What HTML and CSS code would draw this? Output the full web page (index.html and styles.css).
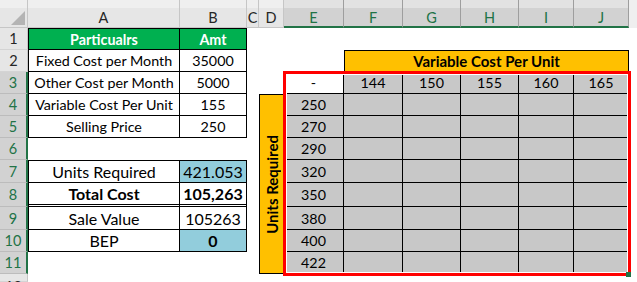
FILE: index.html
```html
<!DOCTYPE html>
<html>
<head>
<meta charset="utf-8">
<link rel="stylesheet" href="styles.css">
</head>
<body>
<div class="sheet">
  <div class="corner"><svg width="14" height="14" viewBox="0 0 14 14"><polygon points="14,0 14,14 0,14" fill="#b4b4b4"/></svg></div>
  <div class="colh ca">A</div>
  <div class="colh cb">B</div>
  <div class="colh cc">C</div>
  <div class="colh cd">D</div>
  <div class="colh ce sel">E</div>
  <div class="colh cf sel">F</div>
  <div class="colh cg sel">G</div>
  <div class="colh chh sel">H</div>
  <div class="colh ci sel">I</div>
  <div class="colh cj sel">J</div>
  <div class="colh cend blank"></div>

  <div class="rowh r1">1</div>
  <div class="rowh r2">2</div>
  <div class="rowh r3 sel">3</div>
  <div class="rowh r4 sel">4</div>
  <div class="rowh r5 sel">5</div>
  <div class="rowh r6 sel">6</div>
  <div class="rowh r7 sel">7</div>
  <div class="rowh r8 sel">8</div>
  <div class="rowh r9 sel">9</div>
  <div class="rowh r10 sel">10</div>
  <div class="rowh r11 sel">11</div>
  <div class="rowh r12">12</div>

  <div class="cell ca r1 bx bt bl green">Particualrs</div>
  <div class="cell cb r1 bx bt green">Amt</div>
  <div class="cell ca r2 bx bl">Fixed Cost per Month</div>
  <div class="cell cb r2 bx">35000</div>
  <div class="cell ca r3 bx bl">Other Cost per Month</div>
  <div class="cell cb r3 bx">5000</div>
  <div class="cell ca r4 bx bl">Variable Cost Per Unit</div>
  <div class="cell cb r4 bx">155</div>
  <div class="cell ca r5 bx bl">Selling Price</div>
  <div class="cell cb r5 bx">250</div>

  <div class="cell ca r7 bx bt bl big">Units Required</div>
  <div class="cell cb r7 bx bt big blue">421.053</div>
  <div class="cell ca r8 bx bl big bold dbl">Total Cost</div>
  <div class="cell cb r8 bx big bold dbl">105,263</div>
  <div class="cell ca r9 bx bl big">Sale Value</div>
  <div class="cell cb r9 bx big">105263</div>
  <div class="cell ca r10 bx bl big">BEP</div>
  <div class="cell cb r10 bx big bold blue">0</div>

  <div class="cell vhead">Variable Cost Per Unit</div>
  <div class="cell dhead"><span class="vtext">Units Required</span></div>

  <div class="data">
    <div class="d w">-</div><div class="d">144</div><div class="d">150</div><div class="d">155</div><div class="d">160</div><div class="d">165</div>
    <div class="d">250</div><div class="d"></div><div class="d"></div><div class="d"></div><div class="d"></div><div class="d"></div>
    <div class="d">270</div><div class="d"></div><div class="d"></div><div class="d"></div><div class="d"></div><div class="d"></div>
    <div class="d">290</div><div class="d"></div><div class="d"></div><div class="d"></div><div class="d"></div><div class="d"></div>
    <div class="d">320</div><div class="d"></div><div class="d"></div><div class="d"></div><div class="d"></div><div class="d"></div>
    <div class="d">350</div><div class="d"></div><div class="d"></div><div class="d"></div><div class="d"></div><div class="d"></div>
    <div class="d">380</div><div class="d"></div><div class="d"></div><div class="d"></div><div class="d"></div><div class="d"></div>
    <div class="d">400</div><div class="d"></div><div class="d"></div><div class="d"></div><div class="d"></div><div class="d"></div>
    <div class="d">422</div><div class="d"></div><div class="d"></div><div class="d"></div><div class="d"></div><div class="d"></div>
  </div>

  <div class="selbox"><span class="handle"></span></div>
</div>
</body>
</html>
```

FILE: styles.css
```css
html, body {
  margin: 0;
  padding: 0;
  background: #fff;
}

.sheet {
  display: grid;
  width: 637px;
  height: 282px;
  overflow: hidden;
  grid-template-columns: [hdr] 28px [a] 152px [b] 67px [c] 12px [d] 25px [e] 60px [f] 59px [g] 58px [h] 58px [i] 55px [j] 55px [jend] 8px [end];
  grid-template-rows: [top] 8px [colhdr] 20px [r1] 22px [r2] 22px [r3] 22px [r4] 22px [r5] 22px [r6] 22px [r7] 23px [r8] 24px [r9] 23px [r10] 22px [r11] 22px [r12] 8px [end];
  font-family: Lato, "Liberation Sans", sans-serif;
  font-size: 14.3px;
  color: #000;
}

.ca { grid-column: a; }
.cb { grid-column: b; }
.cc { grid-column: c; }
.cd { grid-column: d; }
.ce { grid-column: e; }
.cf { grid-column: f; }
.cg { grid-column: g; }
.chh { grid-column: h; }
.ci { grid-column: i; }
.cj { grid-column: j; }
.cend { grid-column: jend / end; }

.r1 { grid-row: r1; }
.r2 { grid-row: r2; }
.r3 { grid-row: r3; }
.r4 { grid-row: r4; }
.r5 { grid-row: r5; }
.r6 { grid-row: r6; }
.r7 { grid-row: r7; }
.r8 { grid-row: r8; }
.r9 { grid-row: r9; }
.r10 { grid-row: r10; }
.r11 { grid-row: r11; }
.r12 { grid-row: r12 / end; }

/* headers */
.corner {
  grid-column: hdr;
  grid-row: top / r1;
  background: linear-gradient(#efefef 0 8px, #e6e6e6 8px);
  border-right: 1px solid #c6c6c6;
  border-bottom: 1px solid #c6c6c6;
  box-sizing: border-box;
  display: flex;
  align-items: flex-end;
  justify-content: flex-end;
  padding: 0 2px 2px 0;
}

.colh {
  grid-row: top / r1;
  box-sizing: border-box;
  padding-top: 8px;
  display: flex;
  align-items: center;
  justify-content: center;
  background: linear-gradient(#efefef 0 8px, #e6e6e6 8px);
  border-right: 1px solid #c6c6c6;
  border-bottom: 1px solid #c6c6c6;
  color: #262626;
  font-size: 14.5px;
}
.colh.sel {
  background: linear-gradient(#e2e2e2 0 8px, #d2d2d2 8px);
  border-right-color: #9e9e9e;
  border-bottom: 2px solid #217346;
  color: #217346;
}
.colh.blank {
  background: #efefef;
  border-right: none;
  border-bottom: none;
}

.rowh {
  grid-column: hdr;
  box-sizing: border-box;
  display: flex;
  align-items: center;
  justify-content: center;
  background: #e6e6e6;
  border-right: 1px solid #c6c6c6;
  border-bottom: 1px solid #d4d4d4;
  color: #262626;
  font-size: 14.5px;
}
.rowh.sel {
  background: #d2d2d2;
  border-right: 2px solid #217346;
  border-bottom-color: #bcbcbc;
  color: #217346;
}
.rowh.r12 {
  align-items: flex-start;
  padding-top: 4px;
}

/* cells */
.cell {
  box-sizing: border-box;
  display: flex;
  align-items: center;
  justify-content: center;
  white-space: nowrap;
  overflow: hidden;
}
.bx {
  border-right: 1px solid #000;
  border-bottom: 1px solid #000;
}
.bt { border-top: 1px solid #000; }
.bl { border-left: 1px solid #000; }
.dbl { border-bottom: 3px double #000; }

.green {
  background: #00b050;
  color: #fff;
  font-weight: 700;
}
.blue { background: #92cddc; }
.big { font-size: 16px; }
.bold { font-weight: 700; }

.vhead {
  grid-column: f / jend;
  grid-row: r2;
  background: #ffc000;
  border: 1px solid #000;
  font-weight: 700;
  font-size: 15px;
}

.dhead {
  grid-column: d;
  grid-row: r4 / r12;
  background: #ffc000;
  border: 1px solid #000;
  font-weight: 700;
  font-size: 15px;
}
.vtext {
  writing-mode: vertical-rl;
  transform: rotate(180deg);
}

.data {
  grid-column: e / jend;
  grid-row: r3 / r12;
  display: grid;
  grid-template-columns: 60px 59px 58px 58px 55px 55px;
  grid-template-rows: 22px 22px 22px 22px 23px 24px 23px 22px 22px;
}
.d {
  box-sizing: border-box;
  display: flex;
  align-items: center;
  justify-content: center;
  background: #c8c8c8;
  border-right: 1px solid #000;
  border-bottom: 1px solid #000;
}
.d.w { background: #fff; }

.selbox {
  grid-column: e / jend;
  grid-row: r3 / r12;
  margin: -1px -2px -2px -1px;
  border: 3px solid #ff0000;
  box-shadow: inset 0 0 0 1px #fff;
  position: relative;
  z-index: 2;
}
.handle {
  position: absolute;
  right: -3px;
  bottom: -4px;
  width: 5px;
  height: 5px;
  background: #217346;
}
```
